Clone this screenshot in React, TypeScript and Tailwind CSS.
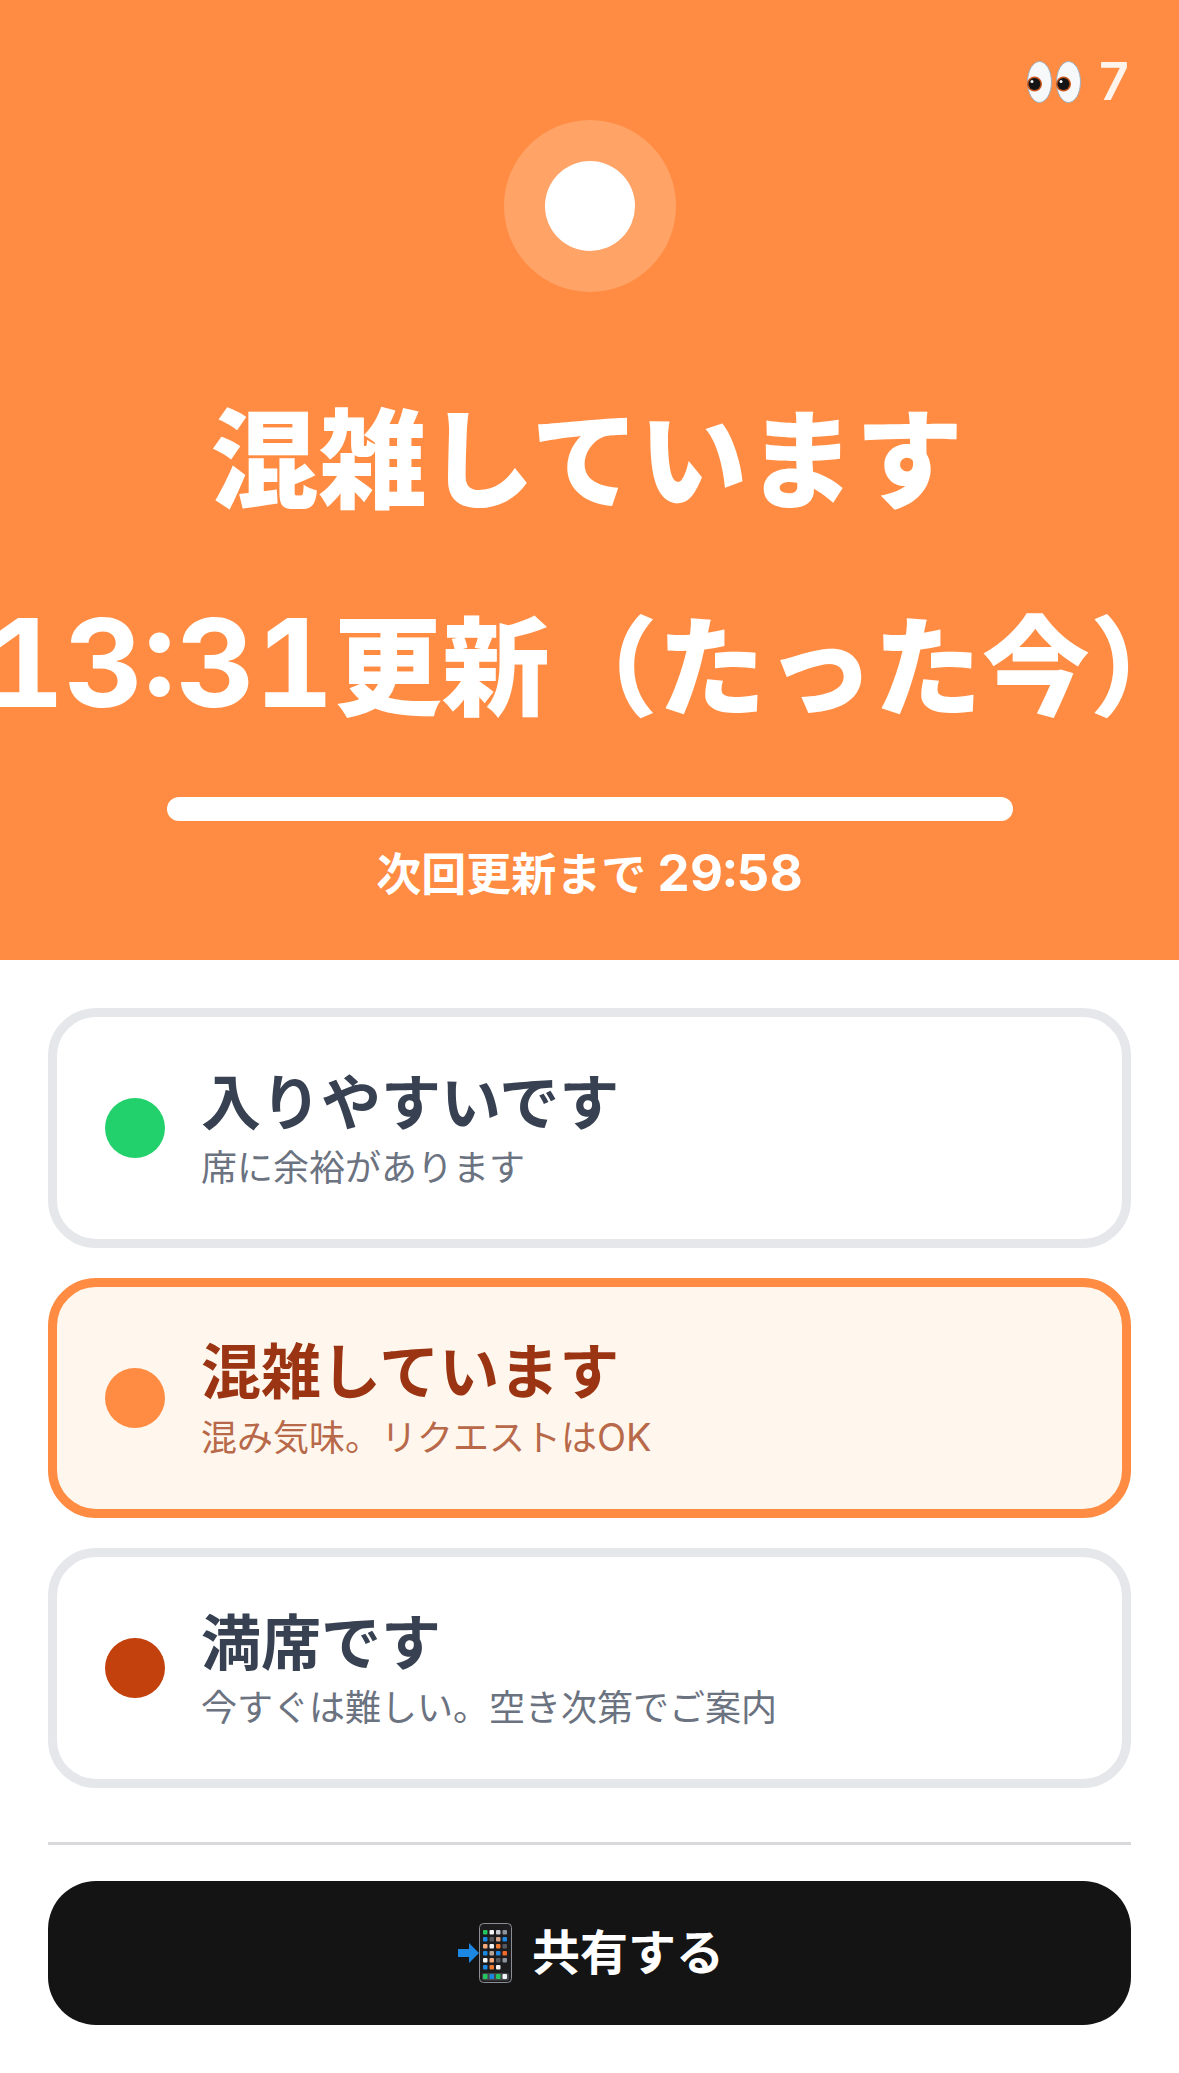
import * as React from 'react';

const FONT = "font-['Inter','Noto_Sans_CJK_JP',sans-serif]";

const OPTIONS = [
  { title: '入りやすいです', sub: '席に余裕があります', dot: 'bg-[#22d16b]', active: false },
  { title: '混雑しています', sub: <>混み気味。リクエストは<span className="text-[38px]">OK</span></>, dot: 'bg-[#ff8c42]', active: true },
  { title: '満席です', sub: '今すぐは難しい。空き次第でご案内', dot: 'bg-[#c2410c]', active: false },
];

const PHONE_ROWS = [
  ['#22c55e', '#f3f4f6', '#c9ccd1', '#8d939c'],
  ['#1d87e4', '#55595f', '#d9a68c', '#1d87e4'],
  ['#f5a97c', '#f3f4f6', '#f07a30', '#55595f'],
  ['#1d87e4', '#b9a596', '#1d87e4', '#f0682a'],
  ['#f3f4f6', '#f5a97c', '#55595f', '#8d939c'],
  ['#1d87e4', '#f07a30', '#f3f4f6', ''],
];

const DOCK = ['#22c55e', '#1d87e4', '#22c55e', '#f3f4f6'];

function EyesIcon() {
  return (
    <svg width="54" height="42" viewBox="0 0 54 42" aria-hidden="true">
      {[0, 29].map((x) => (
        <g key={x} transform={`translate(${x} 0)`}>
          <ellipse cx="12.5" cy="21" rx="12" ry="20.5" fill="#f7f8fa" stroke="#9fb0bd" strokeWidth="1" />
          <circle cx="7.5" cy="23" r="7.5" fill="#c8561c" />
          <circle cx="7.5" cy="23" r="6" fill="#141414" />
          <circle cx="5" cy="20.5" r="1.5" fill="#ffffff" />
        </g>
      ))}
    </svg>
  );
}

function PhoneIcon() {
  return (
    <svg width="54" height="60" viewBox="0 0 54 60" aria-hidden="true">
      <path d="M0 26h11v-6l10 10-10 10v-6H0z" fill="#1d87e4" />
      <rect x="21.5" y="0.5" width="32" height="59" rx="4" fill="#1c1c1e" stroke="#8b8e94" strokeWidth="1" />
      {PHONE_ROWS.map((row, r) =>
        row.map((color, c) =>
          color ? (
            <rect key={`${r}-${c}`} x={25 + c * 6.5} y={7 + r * 7} width="4.5" height="4.5" rx="1" fill={color} />
          ) : null,
        ),
      )}
      <rect x="24" y="50" width="27" height="7.5" rx="2" fill="#45474b" />
      {DOCK.map((color, c) => (
        <rect key={c} x={25 + c * 6.5} y="51" width="4.5" height="5" rx="1" fill={color} />
      ))}
    </svg>
  );
}

export default function App() {
  return (
    <div className={`${FONT} w-[1179px] h-[2073px] bg-white overflow-hidden`}>
      <header className="relative h-[960px] bg-[#ff8c42] overflow-hidden flex flex-col items-center text-white">
        <div className="absolute top-[60px] right-[50px] flex items-center gap-[18px] text-[52px] leading-[44px] font-semibold text-white/90">
          <EyesIcon />
          <span>7</span>
        </div>
        <div className="mt-[120px] w-[172px] h-[172px] rounded-full bg-white/20 flex items-center justify-center">
          <div className="w-[90px] h-[90px] rounded-full bg-white" />
        </div>
        <h1 className="mt-[97px] mr-[5px] text-[108px] leading-[144px] font-black whitespace-nowrap">混雑しています</h1>
        <div className="w-full mt-[58px] flex justify-center">
          <p className="shrink-0 ml-[4px] text-[108px] leading-[144px] font-black whitespace-nowrap">
            <span className="text-[122px] font-bold tabular-nums">13:31</span>更新（たった今）
          </p>
        </div>
        <div className="mt-[57px] w-[846px] h-[24px] rounded-full bg-white" />
        <p className="mt-[20px] text-[45px] leading-[64px] font-bold whitespace-nowrap">
          次回更新まで <span className="text-[51px] tabular-nums">29:58</span>
        </p>
      </header>

      <main className="px-[48px] pt-[48px]">
        <div className="flex flex-col gap-[30px]">
          {OPTIONS.map((o) => (
            <div
              key={o.title}
              className={`h-[240px] rounded-[48px] border-[9px] flex items-center pl-[48px] gap-[36px] ${
                o.active ? 'border-[#ff8c42] bg-[#fff7ed]' : 'border-[#e5e7eb] bg-white'
              }`}
            >
              <span className={`w-[60px] h-[60px] rounded-full shrink-0 ${o.dot}`} />
              <div className="pt-[2px]">
                <div className={`text-[60px] leading-[72px] font-bold ${o.active ? 'text-[#9a3412]' : 'text-[#374151]'}`}>
                  {o.title}
                </div>
                <div className={`mt-[5px] text-[36px] leading-[48px] ${o.active ? 'text-[#b8694a]' : 'text-[#6b7280]'}`}>
                  {o.sub}
                </div>
              </div>
            </div>
          ))}
        </div>
        <div className="mt-[54px] h-[3px] bg-[#d9d9db]" />
        <button className="mt-[36px] pl-[3px] w-full h-[144px] rounded-[48px] bg-[#141414] text-white flex items-center justify-center gap-[20px] text-[48px] font-bold">
          <PhoneIcon />
          <span>共有する</span>
        </button>
      </main>
    </div>
  );
}
